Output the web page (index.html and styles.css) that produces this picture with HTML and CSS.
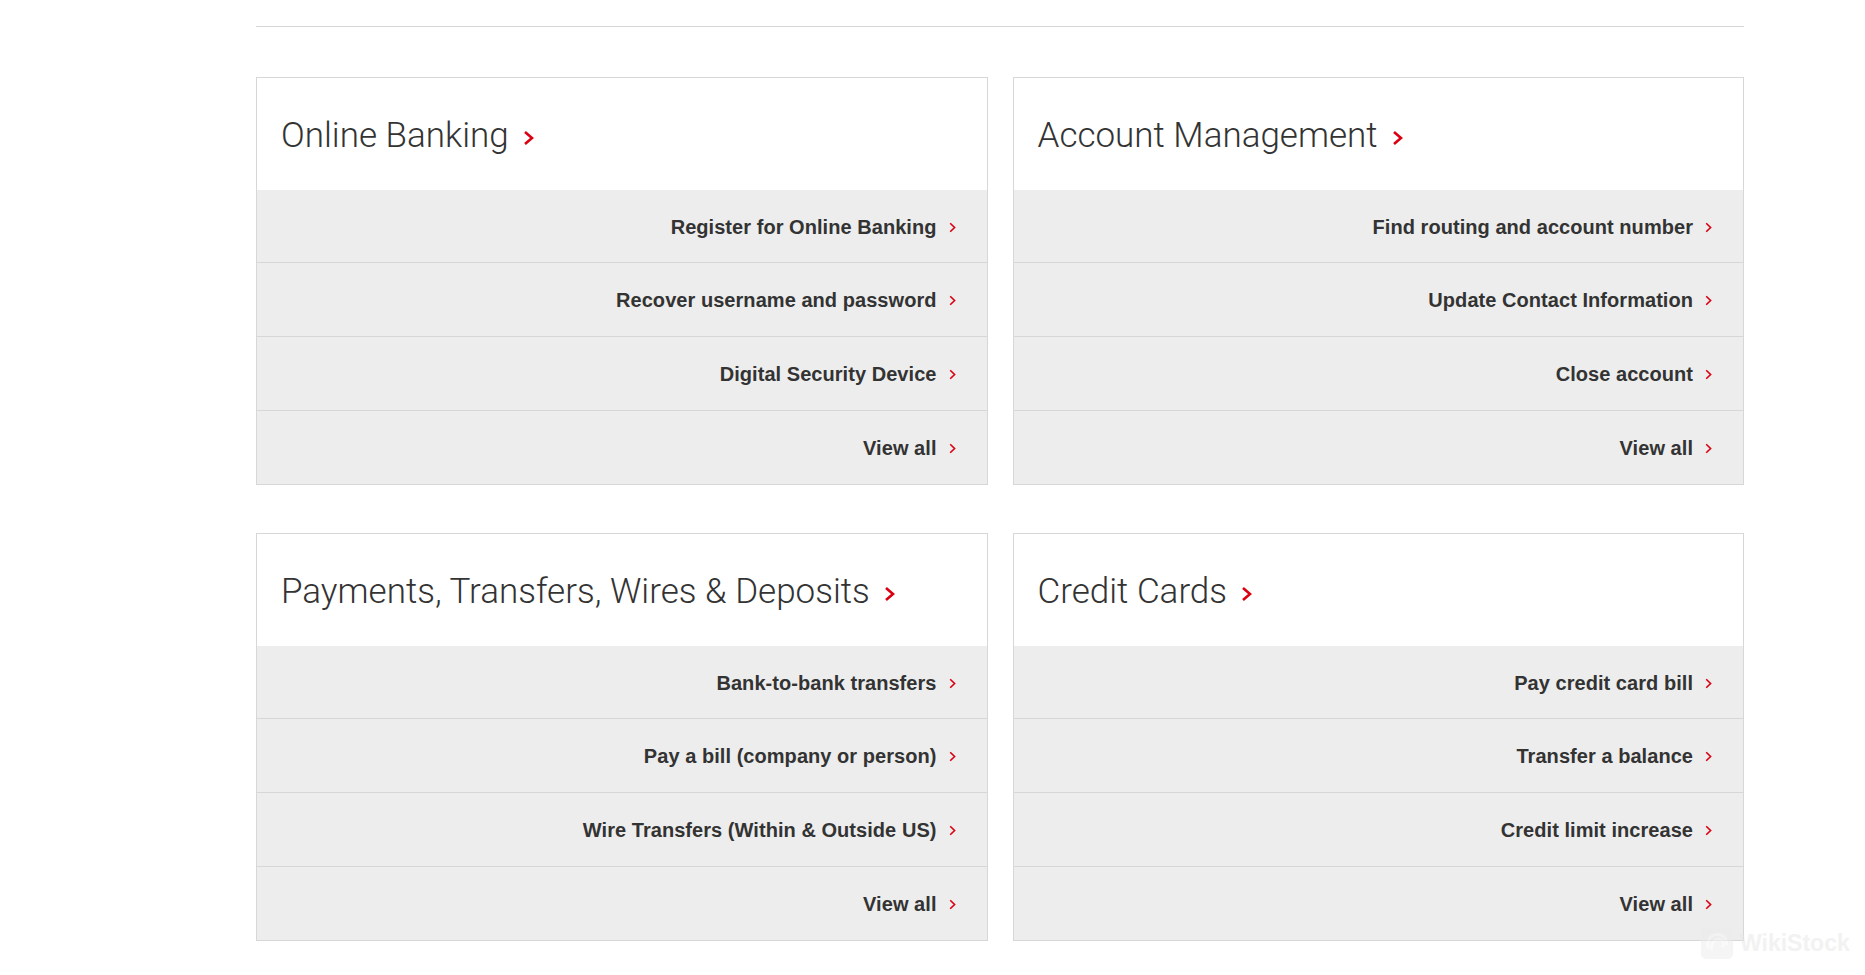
FILE: index.html
```html
<!DOCTYPE html>
<html lang="en">
<head>
    <meta charset="UTF-8">
    <meta name="viewport" content="width=device-width, initial-scale=1.0">
    <title>Help topics</title>
    <link rel="stylesheet" href="styles.css">
</head>
<body>
<div class="page">
    <!-- Linha superior -->
    <div class="top-rule"></div>

    <div class="cards">
        <div class="card">
            <a class="card-title" href="#">Online Banking <svg class="title-arrow" viewBox="0 0 11 16"><path d="M2 2 L9 8 L2 14"/></svg></a>
            <a class="card-link" href="#">Register for Online Banking <svg class="link-arrow" viewBox="0 0 7 11"><path d="M1.2 1.2 L5.6 5.5 L1.2 9.8"/></svg></a>
            <a class="card-link" href="#">Recover username and password <svg class="link-arrow" viewBox="0 0 7 11"><path d="M1.2 1.2 L5.6 5.5 L1.2 9.8"/></svg></a>
            <a class="card-link" href="#">Digital Security Device <svg class="link-arrow" viewBox="0 0 7 11"><path d="M1.2 1.2 L5.6 5.5 L1.2 9.8"/></svg></a>
            <a class="card-link" href="#">View all <svg class="link-arrow" viewBox="0 0 7 11"><path d="M1.2 1.2 L5.6 5.5 L1.2 9.8"/></svg></a>
        </div>

        <div class="card">
            <a class="card-title" href="#">Account Management <svg class="title-arrow" viewBox="0 0 11 16"><path d="M2 2 L9 8 L2 14"/></svg></a>
            <a class="card-link" href="#">Find routing and account number <svg class="link-arrow" viewBox="0 0 7 11"><path d="M1.2 1.2 L5.6 5.5 L1.2 9.8"/></svg></a>
            <a class="card-link" href="#">Update Contact Information <svg class="link-arrow" viewBox="0 0 7 11"><path d="M1.2 1.2 L5.6 5.5 L1.2 9.8"/></svg></a>
            <a class="card-link" href="#">Close account <svg class="link-arrow" viewBox="0 0 7 11"><path d="M1.2 1.2 L5.6 5.5 L1.2 9.8"/></svg></a>
            <a class="card-link" href="#">View all <svg class="link-arrow" viewBox="0 0 7 11"><path d="M1.2 1.2 L5.6 5.5 L1.2 9.8"/></svg></a>
        </div>

        <div class="card">
            <a class="card-title" href="#">Payments, Transfers, Wires &amp; Deposits <svg class="title-arrow" viewBox="0 0 11 16"><path d="M2 2 L9 8 L2 14"/></svg></a>
            <a class="card-link" href="#">Bank-to-bank transfers <svg class="link-arrow" viewBox="0 0 7 11"><path d="M1.2 1.2 L5.6 5.5 L1.2 9.8"/></svg></a>
            <a class="card-link" href="#">Pay a bill (company or person) <svg class="link-arrow" viewBox="0 0 7 11"><path d="M1.2 1.2 L5.6 5.5 L1.2 9.8"/></svg></a>
            <a class="card-link" href="#">Wire Transfers (Within &amp; Outside US) <svg class="link-arrow" viewBox="0 0 7 11"><path d="M1.2 1.2 L5.6 5.5 L1.2 9.8"/></svg></a>
            <a class="card-link" href="#">View all <svg class="link-arrow" viewBox="0 0 7 11"><path d="M1.2 1.2 L5.6 5.5 L1.2 9.8"/></svg></a>
        </div>

        <div class="card">
            <a class="card-title" href="#">Credit Cards <svg class="title-arrow" viewBox="0 0 11 16"><path d="M2 2 L9 8 L2 14"/></svg></a>
            <a class="card-link" href="#">Pay credit card bill <svg class="link-arrow" viewBox="0 0 7 11"><path d="M1.2 1.2 L5.6 5.5 L1.2 9.8"/></svg></a>
            <a class="card-link" href="#">Transfer a balance <svg class="link-arrow" viewBox="0 0 7 11"><path d="M1.2 1.2 L5.6 5.5 L1.2 9.8"/></svg></a>
            <a class="card-link" href="#">Credit limit increase <svg class="link-arrow" viewBox="0 0 7 11"><path d="M1.2 1.2 L5.6 5.5 L1.2 9.8"/></svg></a>
            <a class="card-link" href="#">View all <svg class="link-arrow" viewBox="0 0 7 11"><path d="M1.2 1.2 L5.6 5.5 L1.2 9.8"/></svg></a>
        </div>
    </div>
</div>

<!-- Marca d'água -->
<div class="watermark">
    <svg class="watermark-logo" viewBox="0 0 36 36"><rect x="1" y="1" width="34" height="34" rx="6"/><path d="M9 24 C6 16 12 8 20 9 C26 10 29 15 28 20 M13 26 C11 20 14 14 20 14 C24 14 26 18 24 22"/></svg>
    <span>WikiStock</span>
</div>
</body>
</html>
```

FILE: styles.css
```css
body {
    margin: 0;
    padding: 0;
    background-color: #FFFFFF;
    font-family: "Liberation Sans", Arial, sans-serif;
    color: #333333;
}

.page {
    width: 1488px;
    margin-left: 256px;
    padding-top: 26px;
}

/* Linha fina no topo */
.top-rule {
    border-top: 1px solid #d7d7d7;
}

.cards {
    display: grid;
    grid-template-columns: 1fr 1fr;
    column-gap: 25px;
    row-gap: 48px;
    margin-top: 50px;
}

.card {
    display: flex;
    flex-direction: column;
    border: 1px solid #d7d7d7;
}

.card-title {
    display: flex;
    align-items: center;
    height: 112px;
    padding: 2px 24px 0;
    box-sizing: border-box;
    background-color: #FFFFFF;
    font-family: Roboto, "Liberation Sans", sans-serif;
    font-weight: 300;
    font-size: 35px;
    color: #333333;
    text-decoration: none;
}

.title-arrow {
    width: 11px;
    height: 16px;
    margin-left: 14px;
    margin-top: 5px;
}

.title-arrow path {
    fill: none;
    stroke: #db0011;
    stroke-width: 2.6;
}

.card-link {
    display: flex;
    align-items: center;
    justify-content: flex-end;
    height: 74px;
    padding: 2px 31px 0 0;
    box-sizing: border-box;
    background-color: #ededed;
    border-top: 1px solid #d7d7d7;
    font-weight: bold;
    font-size: 20px;
    letter-spacing: 0.05px;
    color: #333333;
    text-decoration: none;
}

.card-title + .card-link {
    border-top: none;
    height: 72px;
}

.link-arrow {
    width: 7px;
    height: 11px;
    margin-left: 12px;
}

.link-arrow path {
    fill: none;
    stroke: #db0011;
    stroke-width: 1.6;
}

/* Marca d'água no canto */
.watermark {
    position: absolute;
    left: 1700px;
    top: 926px;
    display: flex;
    align-items: center;
    gap: 6px;
    opacity: 0.5;
    font-family: "Liberation Sans", Arial, sans-serif;
    font-weight: bold;
    font-size: 23px;
    color: #e6e6e6;
}

.watermark-logo {
    width: 34px;
    height: 34px;
}

.watermark-logo rect {
    fill: #ececec;
}

.watermark-logo path {
    fill: none;
    stroke: #f7f7f7;
    stroke-width: 3;
}
```
